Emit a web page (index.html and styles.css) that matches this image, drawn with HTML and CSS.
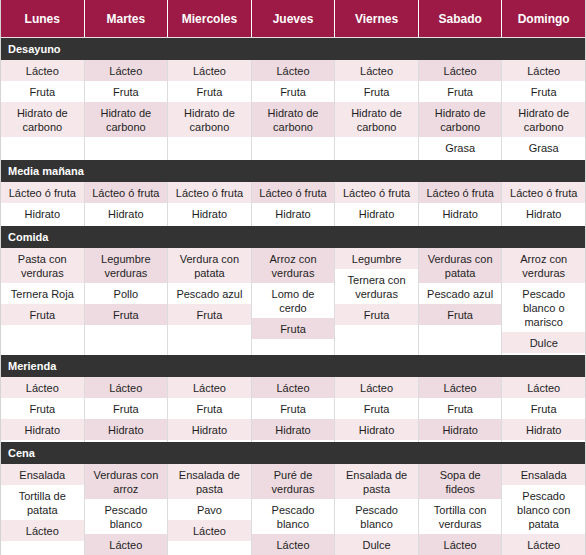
FILE: index.html
```html
<!DOCTYPE html>
<html lang="es">
<head>
<meta charset="utf-8">
<title>Menú semanal</title>
<link rel="stylesheet" href="styles.css">
</head>
<body>
<div class="menu">
  <div class="days">
    <div class="day">Lunes</div>
    <div class="day">Martes</div>
    <div class="day">Miercoles</div>
    <div class="day">Jueves</div>
    <div class="day">Viernes</div>
    <div class="day">Sabado</div>
    <div class="day">Domingo</div>
  </div>

  <div class="meal-title">Desayuno</div>
  <div class="meal">
    <div class="col"><div class="item">Lácteo</div><div class="item">Fruta</div><div class="item">Hidrato de carbono</div></div>
    <div class="col"><div class="item">Lácteo</div><div class="item">Fruta</div><div class="item">Hidrato de carbono</div></div>
    <div class="col"><div class="item">Lácteo</div><div class="item">Fruta</div><div class="item">Hidrato de carbono</div></div>
    <div class="col"><div class="item">Lácteo</div><div class="item">Fruta</div><div class="item">Hidrato de carbono</div></div>
    <div class="col"><div class="item">Lácteo</div><div class="item">Fruta</div><div class="item">Hidrato de carbono</div></div>
    <div class="col"><div class="item">Lácteo</div><div class="item">Fruta</div><div class="item">Hidrato de carbono</div><div class="item">Grasa</div></div>
    <div class="col"><div class="item">Lácteo</div><div class="item">Fruta</div><div class="item">Hidrato de carbono</div><div class="item">Grasa</div></div>
  </div>

  <div class="meal-title">Media mañana</div>
  <div class="meal">
    <div class="col"><div class="item">Lácteo ó fruta</div><div class="item">Hidrato</div></div>
    <div class="col"><div class="item">Lácteo ó fruta</div><div class="item">Hidrato</div></div>
    <div class="col"><div class="item">Lácteo ó fruta</div><div class="item">Hidrato</div></div>
    <div class="col"><div class="item">Lácteo ó fruta</div><div class="item">Hidrato</div></div>
    <div class="col"><div class="item">Lácteo ó fruta</div><div class="item">Hidrato</div></div>
    <div class="col"><div class="item">Lácteo ó fruta</div><div class="item">Hidrato</div></div>
    <div class="col"><div class="item">Lácteo ó fruta</div><div class="item">Hidrato</div></div>
  </div>

  <div class="meal-title">Comida</div>
  <div class="meal">
    <div class="col"><div class="item">Pasta con verduras</div><div class="item">Ternera Roja</div><div class="item">Fruta</div></div>
    <div class="col"><div class="item">Legumbre verduras</div><div class="item">Pollo</div><div class="item">Fruta</div></div>
    <div class="col"><div class="item">Verdura con patata</div><div class="item">Pescado azul</div><div class="item">Fruta</div></div>
    <div class="col"><div class="item">Arroz con verduras</div><div class="item">Lomo de cerdo</div><div class="item">Fruta</div></div>
    <div class="col"><div class="item">Legumbre</div><div class="item">Ternera con verduras</div><div class="item">Fruta</div></div>
    <div class="col"><div class="item">Verduras con patata</div><div class="item">Pescado azul</div><div class="item">Fruta</div></div>
    <div class="col"><div class="item">Arroz con verduras</div><div class="item">Pescado blanco o marisco</div><div class="item">Dulce</div></div>
  </div>

  <div class="meal-title">Merienda</div>
  <div class="meal">
    <div class="col"><div class="item">Lácteo</div><div class="item">Fruta</div><div class="item">Hidrato</div></div>
    <div class="col"><div class="item">Lácteo</div><div class="item">Fruta</div><div class="item">Hidrato</div></div>
    <div class="col"><div class="item">Lácteo</div><div class="item">Fruta</div><div class="item">Hidrato</div></div>
    <div class="col"><div class="item">Lácteo</div><div class="item">Fruta</div><div class="item">Hidrato</div></div>
    <div class="col"><div class="item">Lácteo</div><div class="item">Fruta</div><div class="item">Hidrato</div></div>
    <div class="col"><div class="item">Lácteo</div><div class="item">Fruta</div><div class="item">Hidrato</div></div>
    <div class="col"><div class="item">Lácteo</div><div class="item">Fruta</div><div class="item">Hidrato</div></div>
  </div>

  <div class="meal-title">Cena</div>
  <div class="meal">
    <div class="col"><div class="item">Ensalada</div><div class="item">Tortilla de patata</div><div class="item">Lácteo</div></div>
    <div class="col"><div class="item">Verduras con arroz</div><div class="item">Pescado blanco</div><div class="item">Lácteo</div></div>
    <div class="col"><div class="item">Ensalada de pasta</div><div class="item">Pavo</div><div class="item">Lácteo</div></div>
    <div class="col"><div class="item">Puré de verduras</div><div class="item">Pescado blanco</div><div class="item">Lácteo</div></div>
    <div class="col"><div class="item">Ensalada de pasta</div><div class="item">Pescado blanco</div><div class="item">Dulce</div></div>
    <div class="col"><div class="item">Sopa de fideos</div><div class="item">Tortilla con verduras</div><div class="item">Lácteo</div></div>
    <div class="col"><div class="item">Ensalada</div><div class="item">Pescado blanco con patata</div><div class="item">Lácteo</div></div>
  </div>
</div>
</body>
</html>
```

FILE: styles.css
```css
html, body {
  margin: 0;
  padding: 0;
  background: #ffffff;
}

body {
  font-family: "Liberation Sans", Arial, sans-serif;
  color: #1e1e1e;
}

.menu {
  width: 584px;
  border-left: 1px solid #d4d4d4;
  border-right: 1px solid #d4d4d4;
}

.days {
  display: grid;
  grid-template-columns: repeat(7, 1fr);
  column-gap: 1px;
  background: #ffffff;
  border-bottom: 1px solid #e4dfe1;
}

.day {
  background: #9c1a45;
  color: #ffffff;
  font-weight: bold;
  font-size: 12px;
  height: 37px;
  display: flex;
  align-items: center;
  justify-content: center;
}

.meal-title {
  background: #333333;
  color: #ffffff;
  font-weight: bold;
  font-size: 11px;
  height: 22px;
  line-height: 22px;
  padding-left: 7px;
}

.meal {
  display: grid;
  grid-template-columns: repeat(7, 1fr);
  column-gap: 1px;
  background: #dcdcdc;
}

.col {
  background: #ffffff;
  display: flex;
  flex-direction: column;
  padding-bottom: 2px;
}

.item {
  font-size: 11px;
  line-height: 14px;
  padding: 4px 7px 3px;
  text-align: center;
  background: #ffffff;
}

.col:nth-child(odd) .item:nth-child(odd) {
  background: #f6e7eb;
}

.col:nth-child(even) .item:nth-child(odd) {
  background: #eedbe1;
}
```
